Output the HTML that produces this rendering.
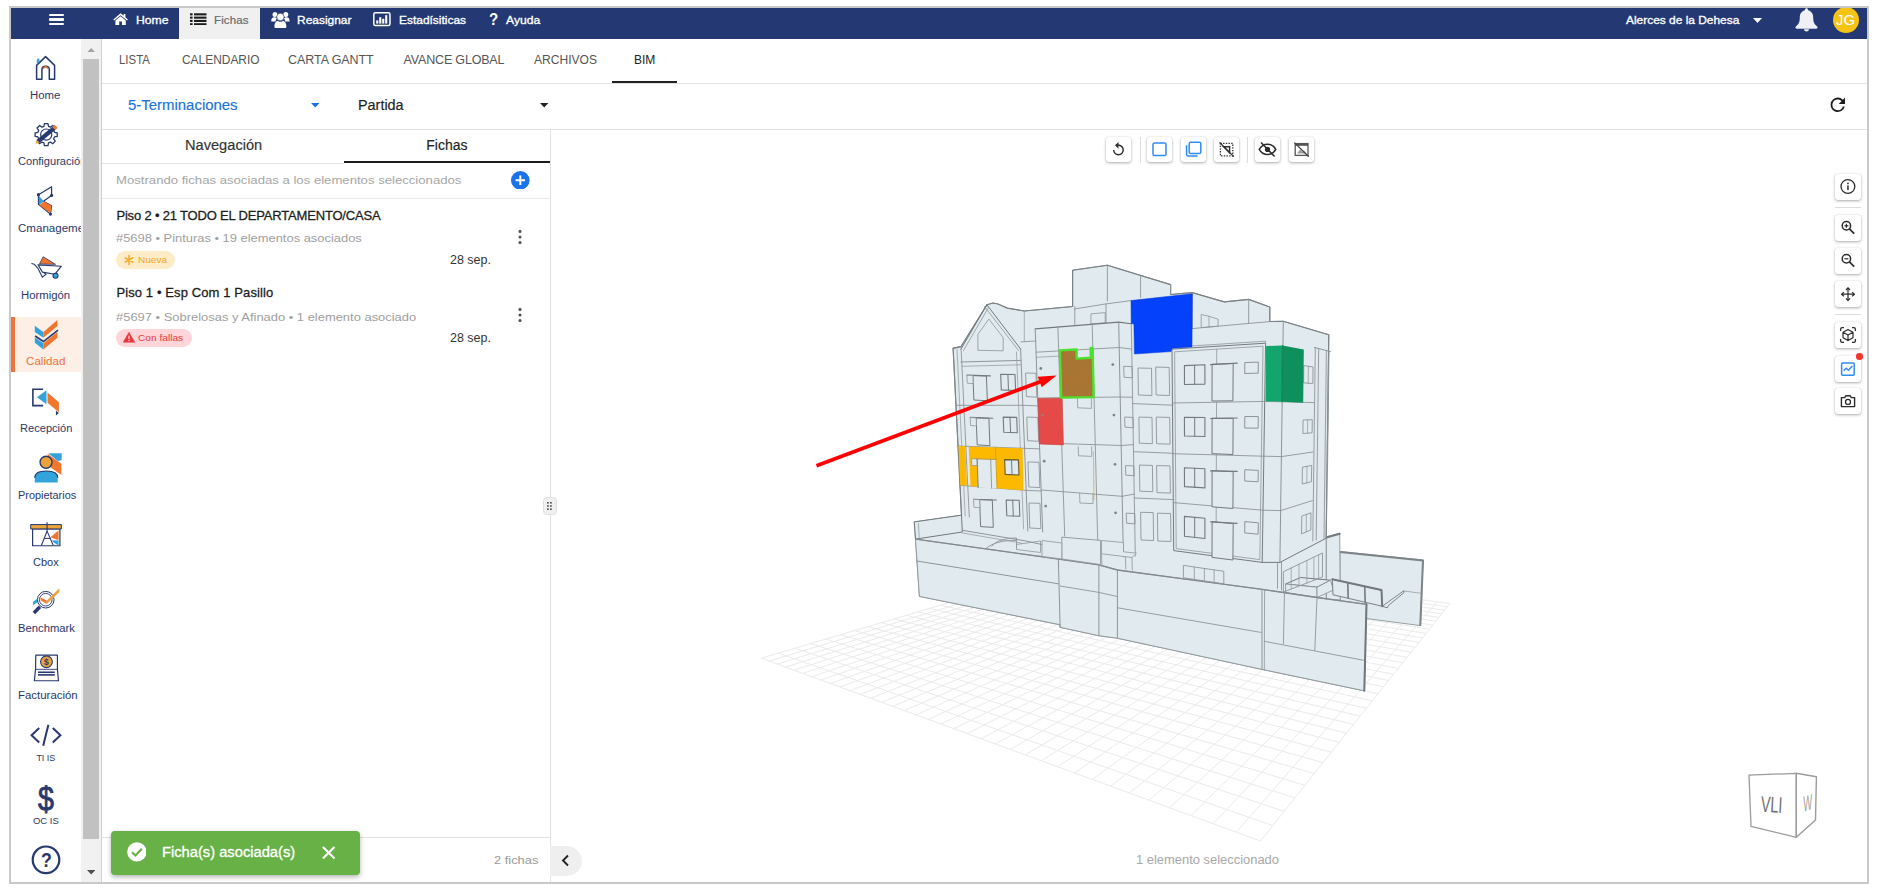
<!DOCTYPE html>
<html lang="es">
<head>
<meta charset="utf-8">
<title>Fichas BIM</title>
<style>
*{box-sizing:border-box;margin:0;padding:0}
html,body{width:1877px;height:890px;overflow:hidden;background:#fff}
body{font-family:"Liberation Sans",sans-serif;position:relative}
#app{position:absolute;left:11px;top:8px;width:1856px;height:874px;overflow:hidden;background:#fff}
#in{position:absolute;left:-11px;top:-8px;width:1877px;height:890px}
#frame{position:absolute;left:9px;top:6px;width:1860px;height:878px;border:2px solid #c9c9c9;pointer-events:none}
.a{position:absolute}
.t{position:absolute;white-space:nowrap;transform-origin:left center}
#topbar{left:11px;top:8px;width:1856px;height:31px;background:#243973}
#tabfichas{left:179px;top:8px;width:81px;height:31px;background:#f0f0f0}
#side{left:11px;top:39px;width:70px;height:843px;background:#fff;overflow:hidden}
#sbtrack{left:81px;top:39px;width:20px;height:843px;background:#f1f1f1}
#sbthumb{left:83px;top:59px;width:16px;height:780px;background:#c1c1c1}
#sbline{left:101px;top:39px;width:1px;height:843px;background:#d0d0d0}
.hl{position:absolute;height:1px;background:#e2e2e2}
.vl{position:absolute;width:1px;background:#e2e2e2}
#active{left:0;top:277.7px;width:70px;height:55.3px;background:#fdeee6;border-left:4px solid #f0743a;position:absolute}
.vb{position:absolute;width:25px;height:25px;background:#fff;border-radius:3px;box-shadow:0 1px 3px rgba(0,0,0,.32),0 0 1px rgba(0,0,0,.12)}
.rb{position:absolute;left:1835px;width:26px;height:26px;background:#fff;border-radius:3px;box-shadow:0 1px 3px rgba(0,0,0,.32),0 0 1px rgba(0,0,0,.12)}
.vb svg,.rb svg{position:absolute;left:0;top:0}
.badge{position:absolute;border-radius:9px}
#toast{left:110.5px;top:831.4px;width:249.2px;height:43.4px;background:#67b146;border-radius:4px;box-shadow:0 2px 5px rgba(0,0,0,.3)}
#collapse{left:550px;top:845.5px;width:32px;height:30.5px;background:#efefef;border-radius:0 15px 15px 0}
#handle{left:542.6px;top:496.6px;width:14.2px;height:18.6px;background:#f0f0f0;border:1px solid #e0e0e0;border-radius:4px}
</style>
</head>
<body>
<div id="app"><div id="in">
  <!-- top bar -->
  <div class="a" id="topbar"></div>
  <div class="a" id="tabfichas"></div>

  <!-- sidebar -->
  <div class="a" id="side">
    <div id="active"></div>
<span class="t" id="s2" style="left:7.2px;top:116.30px;font-size:10px;line-height:13.0px;font-weight:400;color:#2a3766;letter-spacing:0.000px;transform:scaleX(1.1066);">Configuración</span>
<span class="t" id="s3" style="left:7.2px;top:183.00px;font-size:10px;line-height:13.0px;font-weight:400;color:#2a3766;letter-spacing:0.000px;transform:scaleX(1.1556);">Cmanagement</span>
  </div>
  <div class="a" id="sbtrack"></div>
  <div class="a" id="sbthumb"></div>
  <div class="a" id="sbline"></div>

  <!-- rows -->
  <div class="hl" style="left:102px;top:82.5px;width:1765px"></div>
  <div class="a" style="left:611.7px;top:81px;width:65.3px;height:2px;background:#222"></div>
  <div class="hl" style="left:102px;top:129.3px;width:1765px"></div>
  <div class="vl" style="left:550px;top:130px;height:752px"></div>
  <div class="hl" style="left:102px;top:162.5px;width:242px"></div>
  <div class="a" style="left:344px;top:161px;width:206px;height:2px;background:#1c1c1c"></div>
  <div class="hl" style="left:102px;top:197.5px;width:448px;background:#ebebeb"></div>
  <div class="hl" style="left:102px;top:837.3px;width:448px"></div>

  <!-- badges -->
  <div class="badge" style="left:116.4px;top:251px;width:59px;height:18px;background:#fdecc8"></div>
  <div class="badge" style="left:116.4px;top:329.3px;width:75.3px;height:18px;background:#ffd5d9"></div>

  <div class="a" id="handle"></div>
  <div class="a" id="collapse"></div>

<svg class="a" id="bld" style="left:0;top:0" width="1877" height="890" viewBox="0 0 1877 890">
<path d="M761.2 658.2L1104.2 556.7M769.1 661.1L1111.4 557.7M777.2 664.1L1118.6 558.7M785.5 667.1L1126.0 559.7M794.0 670.2L1133.5 560.7M802.7 673.4L1141.1 561.7M811.7 676.7L1148.8 562.7M820.8 680.0L1156.6 563.8M830.3 683.5L1164.5 564.9M840.0 687.0L1172.6 566.0M850.0 690.7L1180.8 567.1M860.2 694.4L1189.1 568.2M870.7 698.3L1197.6 569.3M881.6 702.3L1206.2 570.5M892.7 706.4L1214.9 571.7M904.2 710.6L1223.8 572.9M916.1 714.9L1232.8 574.1M928.3 719.4L1241.9 575.3M940.9 724.0L1251.3 576.6M953.8 728.7L1260.7 577.9M967.2 733.6L1270.4 579.2M981.1 738.7L1280.1 580.5M995.4 743.9L1290.1 581.9M1010.2 749.3L1300.2 583.2M1025.4 754.9L1310.6 584.6M1041.3 760.7L1321.0 586.1M1057.6 766.7L1331.7 587.5M1074.6 772.9L1342.6 589.0M1092.2 779.4L1353.7 590.5M1110.5 786.1L1364.9 592.0M1129.5 793.0L1376.4 593.5M1149.2 800.2L1388.1 595.1M1169.7 807.7L1400.0 596.7M1191.0 815.6L1412.2 598.4M1213.2 823.7L1424.5 600.1M1236.3 832.2L1437.1 601.8M1260.5 841.0L1450.0 603.5M761.2 658.2L1260.5 841.0M778.3 653.1L1272.8 825.6M794.8 648.3L1284.2 811.3M810.6 643.6L1294.9 797.9M825.8 639.1L1304.9 785.4M840.5 634.7L1314.2 773.6M854.6 630.6L1323.0 762.6M868.2 626.5L1331.3 752.2M881.3 622.7L1339.1 742.4M894.0 618.9L1346.5 733.2M906.2 615.3L1353.5 724.4M918.0 611.8L1360.1 716.1M929.4 608.4L1366.4 708.3M940.4 605.2L1372.4 700.8M951.1 602.0L1378.0 693.7M961.5 598.9L1383.4 686.9M971.5 596.0L1388.6 680.5M981.2 593.1L1393.5 674.3M990.6 590.3L1398.2 668.4M999.8 587.6L1402.7 662.8M1008.7 585.0L1407.0 657.4M1017.3 582.4L1411.2 652.2M1025.7 579.9L1415.1 647.2M1033.8 577.5L1418.9 642.4M1041.7 575.2L1422.6 637.9M1049.4 572.9L1426.1 633.5M1056.9 570.7L1429.5 629.2M1064.2 568.5L1432.7 625.1M1071.3 566.4L1435.9 621.2M1078.2 564.4L1438.9 617.4M1085.0 562.4L1441.8 613.8M1091.5 560.5L1444.6 610.2M1097.9 558.6L1447.4 606.8M1104.2 556.7L1450.0 603.5" fill="none" stroke="#ebebeb" stroke-width="1"/>
<polygon points="1340.0,551.5 1423.1,560.0 1420.4,625.6 1366.0,618.5 1340.0,612.0" fill="#e1eaee" stroke="#8d9598" stroke-width="0.9" stroke-linejoin="round" />
<polyline points="1340.0,552.0 1423.0,560.5 1420.3,625.0" fill="none" stroke="#7d8487" stroke-width="2" stroke-linejoin="round" stroke-linecap="round" />
<polyline points="1403.8,591.0 1420.6,593.2" fill="none" stroke="#8d9598" stroke-width="0.7" stroke-linejoin="round" stroke-linecap="round" />
<polygon points="1382.2,606.3 1403.8,590.8 1403.8,592.8 1388.3,605.6 1387.5,607.8" fill="#e1eaee" stroke="#737a7d" stroke-width="0.9" stroke-linejoin="round" />
<polygon points="1326.2,537.0 1339.7,533.2 1340.2,600.0 1326.2,600.0" fill="#e1eaee" stroke="#8d9598" stroke-width="0.9" stroke-linejoin="round" />
<polyline points="1326.2,537.5 1339.7,533.8" fill="none" stroke="#737a7d" stroke-width="2" stroke-linejoin="round" stroke-linecap="round" />
<polygon points="961.5,515.2 953.1,348.3 961.0,346.5 986.9,304.8 993.0,303.0 998.0,304.0 1007.4,308.1 1024.3,311.0 1072.6,306.5 1072.6,270.2 1107.4,265.2 1170.6,284.6 1170.6,294.5 1192.2,292.6 1224.3,301.9 1248.7,299.4 1269.8,307.0 1269.8,321.5 1283.3,321.3 1328.8,334.8 1326.2,538.0 1326.2,600.0 1366.5,604.3 1364.3,690.8 1262.0,669.4 1117.4,638.2 1098.9,635.7 1060.1,627.3 1060.1,624.7 919.4,596.4 914.3,521.9" fill="#e1eaee" stroke="#8d9598" stroke-width="1.0" stroke-linejoin="round" />
<polyline points="961.5,515.2 953.1,348.3 961.0,346.5 986.9,304.8 993.0,303.0 998.0,304.0 1007.4,308.1 1024.3,311.0 1072.6,306.5 1072.6,270.2 1107.4,265.2 1170.6,284.6 1170.6,294.5 1192.2,292.6 1224.3,301.9 1248.7,299.4 1269.8,307.0 1269.8,321.5 1283.3,321.3 1328.8,334.8 1326.2,538.0" fill="none" stroke="#7b8285" stroke-width="1.15" stroke-linejoin="round" stroke-linecap="round" />
<polyline points="1107.4,265.2 1107.4,301.0" fill="none" stroke="#8d9598" stroke-width="0.9" stroke-linejoin="round" stroke-linecap="round" />
<polyline points="1140.6,275.5 1140.6,297.5" fill="none" stroke="#8d9598" stroke-width="0.9" stroke-linejoin="round" stroke-linecap="round" />
<polyline points="1170.6,284.6 1170.6,294.5" fill="none" stroke="#8d9598" stroke-width="0.9" stroke-linejoin="round" stroke-linecap="round" />
<polyline points="1074.3,309.0 1106.0,303.9 1131.0,300.6" fill="none" stroke="#8d9598" stroke-width="0.9" stroke-linejoin="round" stroke-linecap="round" />
<polyline points="1106.0,303.9 1106.0,322.8" fill="none" stroke="#8d9598" stroke-width="0.9" stroke-linejoin="round" stroke-linecap="round" />
<polyline points="1074.8,306.5 1074.8,324.5" fill="none" stroke="#8d9598" stroke-width="0.9" stroke-linejoin="round" stroke-linecap="round" />
<polygon points="1090.9,313.9 1105.2,312.6 1105.2,322.8 1090.9,323.9" fill="none" stroke="#8d9598" stroke-width="0.8" stroke-linejoin="round" />
<polyline points="986.9,304.8 1020.6,349.0" fill="none" stroke="#737a7d" stroke-width="1" stroke-linejoin="round" stroke-linecap="round" />
<polyline points="984.5,306.5 1018.5,350.5" fill="none" stroke="#8d9598" stroke-width="0.8" stroke-linejoin="round" stroke-linecap="round" />
<polyline points="986.9,304.8 961.0,349.0" fill="none" stroke="#737a7d" stroke-width="1" stroke-linejoin="round" stroke-linecap="round" />
<polyline points="988.5,307.5 963.5,350.5" fill="none" stroke="#8d9598" stroke-width="0.8" stroke-linejoin="round" stroke-linecap="round" />
<polyline points="1024.3,311.0 1024.3,341.5" fill="none" stroke="#8d9598" stroke-width="0.7" stroke-linejoin="round" stroke-linecap="round" />
<polyline points="1192.3,293.0 1192.3,328.6" fill="none" stroke="#8d9598" stroke-width="0.9" stroke-linejoin="round" stroke-linecap="round" />
<polyline points="1192.3,328.6 1240.0,324.2 1269.8,321.6" fill="none" stroke="#8d9598" stroke-width="0.9" stroke-linejoin="round" stroke-linecap="round" />
<polyline points="1248.7,299.4 1248.7,323.5" fill="none" stroke="#8d9598" stroke-width="0.9" stroke-linejoin="round" stroke-linecap="round" />
<polygon points="1201.2,314.5 1209.0,316.3 1218.1,319.2 1218.1,326.2 1201.2,327.6" fill="none" stroke="#8d9598" stroke-width="0.8" stroke-linejoin="round" />
<polyline points="1209.0,316.3 1209.0,327.0" fill="none" stroke="#8d9598" stroke-width="0.7" stroke-linejoin="round" stroke-linecap="round" />
<polyline points="1283.3,321.3 1279.9,562.4" fill="none" stroke="#8d9598" stroke-width="1" stroke-linejoin="round" stroke-linecap="round" />
<polyline points="1314.4,347.4 1330.5,351.6" fill="none" stroke="#8d9598" stroke-width="1" stroke-linejoin="round" stroke-linecap="round" />
<polyline points="1315.3,348.0 1312.8,541.0" fill="none" stroke="#8d9598" stroke-width="0.9" stroke-linejoin="round" stroke-linecap="round" />
<polyline points="1318.7,349.0 1316.2,540.0" fill="none" stroke="#8d9598" stroke-width="0.9" stroke-linejoin="round" stroke-linecap="round" />
<polyline points="1326.4,351.0 1324.0,538.0" fill="none" stroke="#8d9598" stroke-width="0.9" stroke-linejoin="round" stroke-linecap="round" />
<polyline points="1329.0,352.0 1327.5,470.0" fill="none" stroke="#8d9598" stroke-width="0.9" stroke-linejoin="round" stroke-linecap="round" />
<polygon points="1172.0,349.1 1265.6,343.2 1262.2,562.4 1173.7,550.6" fill="none" stroke="#737a7d" stroke-width="1" stroke-linejoin="round" />
<polygon points="1174.6,351.8 1263.0,346.2 1259.8,559.6 1176.2,548.6" fill="none" stroke="#8d9598" stroke-width="0.8" stroke-linejoin="round" />
<polyline points="1172.0,349.1 1172.0,347.2 1265.6,341.2 1265.6,343.2" fill="none" stroke="#8d9598" stroke-width="0.8" stroke-linejoin="round" stroke-linecap="round" />
<polyline points="1172.5,403.0 1264.7,401.4" fill="none" stroke="#8d9598" stroke-width="0.9" stroke-linejoin="round" stroke-linecap="round" />
<polyline points="1264.7,401.4 1282.2,401.8" fill="none" stroke="#8d9598" stroke-width="0.9" stroke-linejoin="round" stroke-linecap="round" />
<polyline points="1282.2,401.8 1313.7,402.6" fill="none" stroke="#8d9598" stroke-width="0.9" stroke-linejoin="round" stroke-linecap="round" />
<polyline points="1172.9,453.7 1263.9,456.2" fill="none" stroke="#8d9598" stroke-width="0.9" stroke-linejoin="round" stroke-linecap="round" />
<polyline points="1263.9,456.2 1281.4,456.6" fill="none" stroke="#8d9598" stroke-width="0.9" stroke-linejoin="round" stroke-linecap="round" />
<polyline points="1281.4,456.6 1313.0,452.0" fill="none" stroke="#8d9598" stroke-width="0.9" stroke-linejoin="round" stroke-linecap="round" />
<polyline points="1173.3,502.6 1263.0,510.2" fill="none" stroke="#8d9598" stroke-width="0.9" stroke-linejoin="round" stroke-linecap="round" />
<polyline points="1263.0,510.2 1280.7,510.6" fill="none" stroke="#8d9598" stroke-width="0.9" stroke-linejoin="round" stroke-linecap="round" />
<polyline points="1280.7,510.6 1312.4,500.6" fill="none" stroke="#8d9598" stroke-width="0.9" stroke-linejoin="round" stroke-linecap="round" />
<polyline points="1216.7,349.5 1216.7,366.0" fill="none" stroke="#8d9598" stroke-width="0.8" stroke-linejoin="round" stroke-linecap="round" />
<polyline points="1216.5,402.5 1216.5,420.0" fill="none" stroke="#8d9598" stroke-width="0.8" stroke-linejoin="round" stroke-linecap="round" />
<polyline points="1216.4,454.5 1216.3,472.0" fill="none" stroke="#8d9598" stroke-width="0.8" stroke-linejoin="round" stroke-linecap="round" />
<polyline points="1216.2,505.0 1216.2,523.0" fill="none" stroke="#8d9598" stroke-width="0.8" stroke-linejoin="round" stroke-linecap="round" />
<polygon points="1184.4,365.6 1204.9,364.8 1204.9,384.1 1184.5,384.5" fill="none" stroke="#737a7d" stroke-width="1.1" stroke-linejoin="round" />
<polyline points="1194.6,365.2 1194.7,384.3" fill="none" stroke="#737a7d" stroke-width="1" stroke-linejoin="round" stroke-linecap="round" />
<polygon points="1212.1,364.3 1233.2,363.5 1232.9,400.8 1212.0,401.0" fill="#e1eaee" stroke="#737a7d" stroke-width="1" stroke-linejoin="round" />
<polyline points="1210.6,364.6 1237.2,363.2" fill="none" stroke="#737a7d" stroke-width="1.2" stroke-linejoin="round" stroke-linecap="round" />
<polygon points="1244.8,362.6 1258.3,362.1 1258.2,373.1 1244.7,373.5" fill="none" stroke="#8d9598" stroke-width="1" stroke-linejoin="round" />
<polygon points="1184.4,417.4 1204.9,417.5 1204.9,436.5 1184.5,436.0" fill="none" stroke="#737a7d" stroke-width="1.1" stroke-linejoin="round" />
<polyline points="1194.7,417.5 1194.7,436.2" fill="none" stroke="#737a7d" stroke-width="1" stroke-linejoin="round" stroke-linecap="round" />
<polygon points="1212.1,418.2 1233.2,418.3 1232.9,454.5 1212.0,453.7" fill="#e1eaee" stroke="#737a7d" stroke-width="1" stroke-linejoin="round" />
<polyline points="1210.6,418.5 1237.2,418.0" fill="none" stroke="#737a7d" stroke-width="1.2" stroke-linejoin="round" stroke-linecap="round" />
<polygon points="1244.8,416.5 1258.3,416.6 1258.1,428.2 1244.7,428.0" fill="none" stroke="#8d9598" stroke-width="1" stroke-linejoin="round" />
<polygon points="1184.4,467.7 1204.9,468.7 1204.9,487.9 1184.5,486.6" fill="none" stroke="#737a7d" stroke-width="1.1" stroke-linejoin="round" />
<polyline points="1194.7,468.2 1194.7,487.3" fill="none" stroke="#737a7d" stroke-width="1" stroke-linejoin="round" stroke-linecap="round" />
<polygon points="1212.1,470.6 1233.2,471.7 1232.9,508.5 1212.0,506.8" fill="#e1eaee" stroke="#737a7d" stroke-width="1" stroke-linejoin="round" />
<polyline points="1210.6,470.9 1237.2,471.4" fill="none" stroke="#737a7d" stroke-width="1.2" stroke-linejoin="round" stroke-linecap="round" />
<polygon points="1244.8,469.7 1258.3,470.4 1258.1,481.8 1244.7,481.0" fill="none" stroke="#8d9598" stroke-width="1" stroke-linejoin="round" />
<polygon points="1184.4,516.4 1204.9,518.3 1204.9,538.5 1184.5,536.3" fill="none" stroke="#737a7d" stroke-width="1.1" stroke-linejoin="round" />
<polyline points="1194.7,517.3 1194.7,537.4" fill="none" stroke="#737a7d" stroke-width="1" stroke-linejoin="round" stroke-linecap="round" />
<polygon points="1212.1,521.6 1233.2,523.6 1232.9,560.0 1212.0,557.4" fill="#e1eaee" stroke="#737a7d" stroke-width="1" stroke-linejoin="round" />
<polyline points="1210.6,521.9 1237.2,523.3" fill="none" stroke="#737a7d" stroke-width="1.2" stroke-linejoin="round" stroke-linecap="round" />
<polygon points="1244.8,521.6 1258.3,522.8 1258.1,534.2 1244.7,532.9" fill="none" stroke="#8d9598" stroke-width="1" stroke-linejoin="round" />
<polygon points="1303.8,365.6 1313.0,367.0 1312.8,383.6 1303.6,382.8" fill="none" stroke="#8d9598" stroke-width="0.9" stroke-linejoin="round" />
<polyline points="1308.4,366.3 1308.2,383.2" fill="none" stroke="#8d9598" stroke-width="0.7" stroke-linejoin="round" stroke-linecap="round" />
<polygon points="1303.1,420.0 1312.3,419.7 1312.1,432.8 1302.9,433.5" fill="none" stroke="#8d9598" stroke-width="0.9" stroke-linejoin="round" />
<polyline points="1307.7,419.8 1307.5,433.1" fill="none" stroke="#8d9598" stroke-width="0.7" stroke-linejoin="round" stroke-linecap="round" />
<polygon points="1302.4,467.2 1311.7,465.4 1311.4,481.7 1302.2,484.0" fill="none" stroke="#8d9598" stroke-width="0.9" stroke-linejoin="round" />
<polyline points="1307.0,466.3 1306.8,482.9" fill="none" stroke="#8d9598" stroke-width="0.7" stroke-linejoin="round" stroke-linecap="round" />
<polygon points="1301.8,516.1 1311.0,512.8 1310.8,530.0 1301.5,533.8" fill="none" stroke="#8d9598" stroke-width="0.9" stroke-linejoin="round" />
<polyline points="1306.4,514.5 1306.2,531.9" fill="none" stroke="#8d9598" stroke-width="0.7" stroke-linejoin="round" stroke-linecap="round" />
<polyline points="1131.3,323.7 1135.3,556.0" fill="none" stroke="#8d9598" stroke-width="0.9" stroke-linejoin="round" stroke-linecap="round" />
<polyline points="1132.7,403.6 1173.0,405.2" fill="none" stroke="#8d9598" stroke-width="0.9" stroke-linejoin="round" stroke-linecap="round" />
<polyline points="1133.5,451.7 1173.4,453.3" fill="none" stroke="#8d9598" stroke-width="0.9" stroke-linejoin="round" stroke-linecap="round" />
<polyline points="1134.3,498.0 1173.8,499.6" fill="none" stroke="#8d9598" stroke-width="0.9" stroke-linejoin="round" stroke-linecap="round" />
<polygon points="1123.7,366.3 1132.1,366.6 1132.5,377.8 1124.1,377.3" fill="none" stroke="#8d9598" stroke-width="0.9" stroke-linejoin="round" />
<polygon points="1138.0,368.0 1151.5,368.3 1151.9,395.5 1138.4,395.0" fill="none" stroke="#8d9598" stroke-width="0.9" stroke-linejoin="round" />
<polygon points="1155.7,367.1 1169.2,367.4 1169.6,395.5 1156.1,395.0" fill="none" stroke="#8d9598" stroke-width="0.9" stroke-linejoin="round" />
<polygon points="1124.6,417.1 1133.0,417.4 1133.4,427.7 1125.0,427.2" fill="none" stroke="#8d9598" stroke-width="0.9" stroke-linejoin="round" />
<polygon points="1138.9,417.1 1152.0,417.4 1152.4,443.7 1139.3,443.2" fill="none" stroke="#8d9598" stroke-width="0.9" stroke-linejoin="round" />
<polygon points="1156.2,417.1 1169.7,417.4 1170.1,444.2 1156.6,443.7" fill="none" stroke="#8d9598" stroke-width="0.9" stroke-linejoin="round" />
<polygon points="1125.4,465.6 1133.8,465.9 1134.2,475.7 1125.8,475.2" fill="none" stroke="#8d9598" stroke-width="0.9" stroke-linejoin="round" />
<polygon points="1139.4,465.1 1152.4,465.4 1152.8,491.7 1139.8,491.2" fill="none" stroke="#8d9598" stroke-width="0.9" stroke-linejoin="round" />
<polygon points="1156.6,465.6 1170.0,465.9 1170.4,493.1 1157.0,492.6" fill="none" stroke="#8d9598" stroke-width="0.9" stroke-linejoin="round" />
<polygon points="1126.2,513.2 1134.7,513.5 1135.1,523.8 1126.6,523.3" fill="none" stroke="#8d9598" stroke-width="0.9" stroke-linejoin="round" />
<polygon points="1140.6,512.3 1153.2,512.6 1153.6,540.5 1141.0,540.0" fill="none" stroke="#8d9598" stroke-width="0.9" stroke-linejoin="round" />
<polygon points="1157.4,513.2 1170.6,513.5 1171.0,541.5 1157.8,541.0" fill="none" stroke="#8d9598" stroke-width="0.9" stroke-linejoin="round" />
<polyline points="1035.2,328.9 1118.7,322.1 1131.3,323.7" fill="none" stroke="#737a7d" stroke-width="1.1" stroke-linejoin="round" stroke-linecap="round" />
<polyline points="1035.2,328.9 1042.7,532.0" fill="none" stroke="#8d9598" stroke-width="1" stroke-linejoin="round" stroke-linecap="round" />
<polyline points="1118.7,322.1 1123.4,557.0" fill="none" stroke="#8d9598" stroke-width="1" stroke-linejoin="round" stroke-linecap="round" />
<polyline points="1057.9,327.0 1064.7,536.0" fill="none" stroke="#8d9598" stroke-width="0.9" stroke-linejoin="round" stroke-linecap="round" />
<polyline points="1092.2,324.3 1097.9,548.0" fill="none" stroke="#8d9598" stroke-width="0.9" stroke-linejoin="round" stroke-linecap="round" />
<polyline points="1036.1,352.2 1119.2,347.5" fill="none" stroke="#8d9598" stroke-width="0.9" stroke-linejoin="round" stroke-linecap="round" />
<polyline points="1119.2,347.5 1131.7,349.1" fill="none" stroke="#8d9598" stroke-width="0.9" stroke-linejoin="round" stroke-linecap="round" />
<polyline points="1037.8,398.0 1120.2,397.0" fill="none" stroke="#8d9598" stroke-width="0.9" stroke-linejoin="round" stroke-linecap="round" />
<polyline points="1120.2,397.0 1132.6,397.3" fill="none" stroke="#8d9598" stroke-width="0.9" stroke-linejoin="round" stroke-linecap="round" />
<polyline points="1039.4,442.9 1121.2,445.5" fill="none" stroke="#8d9598" stroke-width="0.9" stroke-linejoin="round" stroke-linecap="round" />
<polyline points="1121.2,445.5 1133.4,444.6" fill="none" stroke="#8d9598" stroke-width="0.9" stroke-linejoin="round" stroke-linecap="round" />
<polyline points="1041.2,490.0 1122.2,496.3" fill="none" stroke="#8d9598" stroke-width="0.9" stroke-linejoin="round" stroke-linecap="round" />
<polyline points="1122.2,496.3 1134.3,494.1" fill="none" stroke="#8d9598" stroke-width="0.9" stroke-linejoin="round" stroke-linecap="round" />
<polyline points="1036.3,357.3 1059.5,356.1" fill="none" stroke="#8d9598" stroke-width="0.7" stroke-linejoin="round" stroke-linecap="round" />
<circle cx="1040.8" cy="368.5" r="1.4" fill="#7e8588"/>
<circle cx="1112.8" cy="364.6" r="1.4" fill="#7e8588"/>
<circle cx="1042.5" cy="415.1" r="1.4" fill="#7e8588"/>
<circle cx="1113.9" cy="415.1" r="1.4" fill="#7e8588"/>
<circle cx="1044.2" cy="461.2" r="1.4" fill="#7e8588"/>
<circle cx="1115" cy="464.3" r="1.4" fill="#7e8588"/>
<circle cx="1045.7" cy="506.1" r="1.4" fill="#7e8588"/>
<circle cx="1115.6" cy="512.8" r="1.4" fill="#7e8588"/>
<polyline points="1077.4,398.2 1077.7,407.8 1091.4,408.4 1091.4,398.2" fill="none" stroke="#8d9598" stroke-width="0.8" stroke-linejoin="round" stroke-linecap="round" />
<polyline points="1078.2,446.6 1078.5,455.8 1091.7,456.4 1091.7,446.6" fill="none" stroke="#8d9598" stroke-width="0.8" stroke-linejoin="round" stroke-linecap="round" />
<polyline points="1079.6,493.8 1079.9,503.0 1093.0,503.6 1093.0,493.8" fill="none" stroke="#8d9598" stroke-width="0.8" stroke-linejoin="round" stroke-linecap="round" />
<polyline points="1093.4,451.6 1094.0,499.7" fill="none" stroke="#c9a04a" stroke-width="0.9" stroke-linejoin="round" stroke-linecap="round" stroke-opacity="0.75"/>
<polyline points="953.1,348.3 961.0,346.5" fill="none" stroke="#737a7d" stroke-width="1" stroke-linejoin="round" stroke-linecap="round" />
<polyline points="961.0,347.0 969.3,517.0" fill="none" stroke="#8d9598" stroke-width="0.9" stroke-linejoin="round" stroke-linecap="round" />
<polyline points="957.0,349.0 965.2,516.0" fill="none" stroke="#8d9598" stroke-width="0.7" stroke-linejoin="round" stroke-linecap="round" />
<polyline points="1020.6,348.6 1027.8,531.0" fill="none" stroke="#8d9598" stroke-width="1" stroke-linejoin="round" stroke-linecap="round" />
<polyline points="1016.5,352.0 1023.6,529.0" fill="none" stroke="#8d9598" stroke-width="0.7" stroke-linejoin="round" stroke-linecap="round" />
<polyline points="1020.9,341.9 1035.2,341.0" fill="none" stroke="#8d9598" stroke-width="0.9" stroke-linejoin="round" stroke-linecap="round" />
<polygon points="977.9,334.3 988.9,319.1 1003.2,337.6 1003.2,350.8 977.9,350.3" fill="none" stroke="#8d9598" stroke-width="0.8" stroke-linejoin="round" />
<polyline points="961.0,362.0 1020.9,360.4" fill="none" stroke="#8d9598" stroke-width="1" stroke-linejoin="round" stroke-linecap="round" />
<polyline points="962.0,366.3 1020.9,364.8" fill="none" stroke="#8d9598" stroke-width="0.7" stroke-linejoin="round" stroke-linecap="round" />
<polyline points="955.9,405.3 1022.8,405.3 1038.1,405.9" fill="none" stroke="#8d9598" stroke-width="0.9" stroke-linejoin="round" stroke-linecap="round" />
<polyline points="958.0,446.0 1024.5,448.3 1039.7,448.9" fill="none" stroke="#8d9598" stroke-width="0.9" stroke-linejoin="round" stroke-linecap="round" />
<polyline points="959.9,485.3 1026.2,490.4 1041.2,491.0" fill="none" stroke="#8d9598" stroke-width="0.9" stroke-linejoin="round" stroke-linecap="round" />
<polygon points="972.9,375.6 986.4,376.0 987.4,400.8 973.9,400.0" fill="#e1eaee" stroke="#737a7d" stroke-width="1" stroke-linejoin="round" />
<polyline points="966.9,375.1 990.4,375.9" fill="none" stroke="#737a7d" stroke-width="1.1" stroke-linejoin="round" stroke-linecap="round" />
<polygon points="966.9,375.3 972.9,375.6 973.2,383.6 967.3,383.2" fill="#e1eaee" stroke="#8d9598" stroke-width="0.8" stroke-linejoin="round" />
<polygon points="1000.7,374.2 1015.0,374.5 1015.6,390.5 1001.3,389.9" fill="#e1eaee" stroke="#737a7d" stroke-width="1.1" stroke-linejoin="round" />
<polyline points="1007.9,374.4 1008.5,390.2" fill="none" stroke="#737a7d" stroke-width="1" stroke-linejoin="round" stroke-linecap="round" />
<polygon points="1025.6,373.0 1036.0,373.3 1036.8,397.2 1026.4,396.6" fill="none" stroke="#8d9598" stroke-width="0.9" stroke-linejoin="round" />
<polygon points="976.2,417.9 988.9,418.3 989.9,445.7 977.2,444.9" fill="#e1eaee" stroke="#737a7d" stroke-width="1" stroke-linejoin="round" />
<polyline points="970.2,417.4 992.9,418.2" fill="none" stroke="#737a7d" stroke-width="1.1" stroke-linejoin="round" stroke-linecap="round" />
<polygon points="970.2,417.6 976.2,417.9 976.5,425.9 970.6,425.5" fill="#e1eaee" stroke="#8d9598" stroke-width="0.8" stroke-linejoin="round" />
<polygon points="1003.2,417.1 1016.7,417.4 1017.3,432.8 1003.8,432.2" fill="#e1eaee" stroke="#737a7d" stroke-width="1.1" stroke-linejoin="round" />
<polyline points="1010.0,417.3 1010.6,432.5" fill="none" stroke="#737a7d" stroke-width="1" stroke-linejoin="round" stroke-linecap="round" />
<polygon points="1026.8,417.1 1037.8,417.4 1038.6,441.3 1027.6,440.7" fill="none" stroke="#8d9598" stroke-width="0.9" stroke-linejoin="round" />
<polygon points="979.6,499.7 992.3,500.1 993.3,527.4 980.6,526.6" fill="#e1eaee" stroke="#737a7d" stroke-width="1" stroke-linejoin="round" />
<polyline points="973.6,499.2 996.3,500.0" fill="none" stroke="#737a7d" stroke-width="1.1" stroke-linejoin="round" stroke-linecap="round" />
<polygon points="973.6,499.4 979.6,499.7 979.9,507.7 974.0,507.3" fill="#e1eaee" stroke="#8d9598" stroke-width="0.8" stroke-linejoin="round" />
<polygon points="1006.2,500.0 1019.2,500.3 1019.8,516.3 1006.8,515.7" fill="#e1eaee" stroke="#737a7d" stroke-width="1.1" stroke-linejoin="round" />
<polyline points="1012.7,500.2 1013.3,516.0" fill="none" stroke="#737a7d" stroke-width="1" stroke-linejoin="round" stroke-linecap="round" />
<polygon points="1029.0,503.0 1040.0,503.3 1040.8,528.6 1029.8,528.0" fill="none" stroke="#8d9598" stroke-width="0.9" stroke-linejoin="round" />
<polygon points="958.5,446.1 965.3,446.3 967.0,485.6 960.2,485.3" fill="#fdb900" stroke="none" stroke-width="0.9" stroke-linejoin="round" />
<polygon points="968.7,446.6 1022.6,448.3 1023.4,490.4 970.5,486.2" fill="#fdb900" stroke="none" stroke-width="0.9" stroke-linejoin="round" />
<polygon points="977.1,458.9 996.2,459.5 997.0,488.4 978.2,487.6" fill="#e1eaee" stroke="none" stroke-width="0.9" stroke-linejoin="round" />
<polygon points="971.5,458.7 977.1,458.9 977.3,465.6 971.8,465.4" fill="#e1eaee" stroke="#8d9598" stroke-width="0.7" stroke-linejoin="round" />
<polyline points="977.1,458.9 978.2,487.6" fill="none" stroke="#737a7d" stroke-width="0.9" stroke-linejoin="round" stroke-linecap="round" />
<polyline points="990.7,459.3 991.6,488.1" fill="none" stroke="#8d9598" stroke-width="0.9" stroke-linejoin="round" stroke-linecap="round" />
<polyline points="977.1,458.9 996.2,459.5" fill="none" stroke="#a98a3a" stroke-width="0.8" stroke-linejoin="round" stroke-linecap="round" />
<polygon points="1004.6,459.6 1018.4,459.9 1019.0,475.0 1005.2,474.4" fill="#e1eaee" stroke="#6b5a2a" stroke-width="1.1" stroke-linejoin="round" />
<polyline points="1011.5,459.8 1012.1,474.7" fill="none" stroke="#737a7d" stroke-width="1" stroke-linejoin="round" stroke-linecap="round" />
<polygon points="1028.0,462.0 1039.0,462.3 1039.8,487.6 1028.8,487.0" fill="none" stroke="#8d9598" stroke-width="0.9" stroke-linejoin="round" />
<polyline points="995.5,447.3 997.0,488.2" fill="none" stroke="#d49b00" stroke-width="0.9" stroke-linejoin="round" stroke-linecap="round" />
<polygon points="1037.8,398.5 1062.2,398.2 1063.4,444.9 1039.4,444.0" fill="#e64a48" stroke="#c24040" stroke-width="0.6" stroke-linejoin="round" />
<circle cx="1042.5" cy="415.1" r="1.4" fill="#9a7c80"/>
<polygon points="1059.9,350.4 1076.6,349.5 1076.6,358.6 1090.7,357.8 1090.7,347.9 1092.6,347.9 1093.6,397.1 1061.2,397.6" fill="#a97533" stroke="#4ae22c" stroke-width="2.4" stroke-linejoin="round" />
<polygon points="1131.0,300.5 1192.3,293.8 1192.0,346.9 1172.1,348.3 1171.1,351.6 1134.4,354.0 1133.9,324.1 1131.2,323.5" fill="#0341fa" stroke="#0338d8" stroke-width="0.5" stroke-linejoin="round" />
<polygon points="1266.1,346.1 1282.4,345.4 1281.6,401.7 1265.6,401.4" fill="#12a56d" stroke="none" stroke-width="0.9" stroke-linejoin="round" />
<polygon points="1282.4,345.4 1303.8,349.4 1303.2,402.7 1281.6,401.7" fill="#0f8f5b" stroke="none" stroke-width="0.9" stroke-linejoin="round" />
<polyline points="1282.4,345.4 1281.6,401.7" fill="none" stroke="#0c7a4d" stroke-width="0.8" stroke-linejoin="round" stroke-linecap="round" />
<polygon points="914.3,521.9 961.5,515.2 962.3,532.0 915.5,539.1" fill="#e1eaee" stroke="#737a7d" stroke-width="1" stroke-linejoin="round" />
<polyline points="918.5,523.5 919.2,538.3" fill="none" stroke="#8d9598" stroke-width="0.7" stroke-linejoin="round" stroke-linecap="round" />
<polyline points="962.3,530.3 1026.0,541.0 1045.0,545.2" fill="none" stroke="#8d9598" stroke-width="1" stroke-linejoin="round" stroke-linecap="round" />
<polyline points="962.3,533.0 1022.0,543.2" fill="none" stroke="#8d9598" stroke-width="0.7" stroke-linejoin="round" stroke-linecap="round" />
<polygon points="1285.6,584.0 1300.5,577.5 1330.5,580.2 1317.0,587.2" fill="#e1eaee" stroke="#737a7d" stroke-width="1" stroke-linejoin="round" />
<polygon points="1285.6,584.0 1317.0,587.2 1317.0,597.5 1285.6,592.6" fill="#e1eaee" stroke="#8d9598" stroke-width="0.9" stroke-linejoin="round" />
<polygon points="1317.0,587.2 1330.5,580.2 1333.5,590.0 1317.0,597.5" fill="#e1eaee" stroke="#8d9598" stroke-width="0.9" stroke-linejoin="round" />
<polygon points="1332.3,579.3 1381.5,590.1 1382.2,606.3 1333.0,594.8" fill="#e1eaee" stroke="#7f8689" stroke-width="1.1" stroke-linejoin="round" />
<polyline points="1332.3,579.3 1381.5,590.1 1382.2,606.3" fill="none" stroke="#737a7d" stroke-width="2" stroke-linejoin="round" stroke-linecap="round" />
<polyline points="1347.8,582.8 1348.2,598.3" fill="none" stroke="#737a7d" stroke-width="1.6" stroke-linejoin="round" stroke-linecap="round" />
<polyline points="1364.7,586.5 1365.2,602.3" fill="none" stroke="#737a7d" stroke-width="1.6" stroke-linejoin="round" stroke-linecap="round" />
<polygon points="915.5,539.1 1058.4,559.0 1098.9,564.9 1117.4,570.0 1180.0,578.4 1264.3,589.7 1317.0,597.5 1366.5,604.3 1364.3,690.8 1262.0,669.4 1117.4,638.2 1098.9,635.7 1060.1,627.3 1060.1,624.7 919.4,596.4" fill="#e1eaee" stroke="#8d9598" stroke-width="0.9" stroke-linejoin="round" />
<polyline points="915.5,539.1 1058.4,559.0 1098.9,564.9 1117.4,570.0 1180.0,578.4 1264.3,589.7 1317.0,597.5 1366.5,604.3" fill="none" stroke="#838a8d" stroke-width="1.35" stroke-linejoin="round" stroke-linecap="round" />
<polygon points="1061.8,537.1 1100.6,540.4 1100.6,564.6 1061.8,559.0" fill="#e1eaee" stroke="#8d9598" stroke-width="0.9" stroke-linejoin="round" />
<polygon points="1042.0,540.5 1061.8,543.0 1061.8,559.0 1042.0,556.4" fill="#e1eaee" stroke="#8d9598" stroke-width="0.8" stroke-linejoin="round" />
<polygon points="1101.5,553.8 1132.0,557.5 1136.5,553.2 1123.5,551.8 1123.5,542.5 1101.5,540.5" fill="#e1eaee" stroke="#8d9598" stroke-width="0.8" stroke-linejoin="round" />
<polyline points="1101.5,554.5 1102.0,566.0" fill="none" stroke="#8d9598" stroke-width="0.8" stroke-linejoin="round" stroke-linecap="round" />
<polyline points="1125.5,557.0 1125.8,569.0" fill="none" stroke="#8d9598" stroke-width="0.8" stroke-linejoin="round" stroke-linecap="round" />
<polyline points="1132.0,557.8 1132.3,570.0" fill="none" stroke="#8d9598" stroke-width="0.8" stroke-linejoin="round" stroke-linecap="round" />
<path d="M991.5 546.5 C996 540.5 1006 538 1016.5 538 L1016.5 548.5 M986 548.5 C992 543 1004 540 1016 540.5" fill="none" stroke="#8d9598" stroke-width="0.9"/>
<polygon points="1016.5,544.5 1040.5,541.0 1040.5,552.5 1016.5,549.5" fill="none" stroke="#8d9598" stroke-width="0.8" stroke-linejoin="round" />
<polyline points="1058.4,559.0 1060.1,627.3" fill="none" stroke="#8d9598" stroke-width="1" stroke-linejoin="round" stroke-linecap="round" />
<polyline points="1098.9,564.9 1098.9,635.7" fill="none" stroke="#8d9598" stroke-width="1" stroke-linejoin="round" stroke-linecap="round" />
<polyline points="1117.4,570.0 1117.4,638.2" fill="none" stroke="#8d9598" stroke-width="1" stroke-linejoin="round" stroke-linecap="round" />
<polyline points="916.9,561.0 1058.4,583.8" fill="none" stroke="#8d9598" stroke-width="1" stroke-linejoin="round" stroke-linecap="round" />
<polyline points="1060.1,586.0 1098.9,592.4 1116.6,596.4" fill="none" stroke="#8d9598" stroke-width="0.9" stroke-linejoin="round" stroke-linecap="round" />
<polyline points="1118.3,607.9 1260.9,632.4" fill="none" stroke="#8d9598" stroke-width="0.9" stroke-linejoin="round" stroke-linecap="round" />
<polyline points="1262.0,589.4 1262.0,669.4" fill="none" stroke="#8d9598" stroke-width="1" stroke-linejoin="round" stroke-linecap="round" />
<polyline points="1264.6,589.8 1264.3,669.9" fill="none" stroke="#8d9598" stroke-width="0.8" stroke-linejoin="round" stroke-linecap="round" />
<polyline points="1284.5,591.9 1283.4,643.6" fill="none" stroke="#8d9598" stroke-width="0.9" stroke-linejoin="round" stroke-linecap="round" />
<polyline points="1317.0,597.5 1314.8,650.3" fill="none" stroke="#8d9598" stroke-width="0.9" stroke-linejoin="round" stroke-linecap="round" />
<polyline points="1264.3,641.3 1364.3,660.4" fill="none" stroke="#8d9598" stroke-width="0.9" stroke-linejoin="round" stroke-linecap="round" />
<polyline points="1366.5,604.3 1364.3,690.8" fill="none" stroke="#70777a" stroke-width="2" stroke-linejoin="round" stroke-linecap="round" />
<polygon points="1183.4,565.4 1223.8,571.3 1223.8,583.8 1183.4,577.8" fill="none" stroke="#8d9598" stroke-width="0.9" stroke-linejoin="round" />
<polyline points="1194.3,567.0 1194.3,579.4" fill="none" stroke="#8d9598" stroke-width="0.8" stroke-linejoin="round" stroke-linecap="round" />
<polyline points="1204.4,568.5 1204.4,580.9" fill="none" stroke="#8d9598" stroke-width="0.8" stroke-linejoin="round" stroke-linecap="round" />
<polyline points="1214.1,569.9 1214.1,582.3" fill="none" stroke="#8d9598" stroke-width="0.8" stroke-linejoin="round" stroke-linecap="round" />
<polyline points="1262.2,562.4 1279.9,562.4 1326.0,538.3" fill="none" stroke="#737a7d" stroke-width="1" stroke-linejoin="round" stroke-linecap="round" />
<polyline points="1277.5,563.5 1277.5,588.5" fill="none" stroke="#8d9598" stroke-width="0.9" stroke-linejoin="round" stroke-linecap="round" />
<polyline points="1281.5,562.0 1281.5,590.0" fill="none" stroke="#8d9598" stroke-width="0.9" stroke-linejoin="round" stroke-linecap="round" />
<polygon points="1283.4,571.7 1322.5,553.0 1322.5,577.0 1283.4,592.0" fill="none" stroke="#8d9598" stroke-width="0.9" stroke-linejoin="round" />
<polyline points="1291.2,568.0 1291.2,589.0" fill="none" stroke="#8d9598" stroke-width="0.7" stroke-linejoin="round" stroke-linecap="round" />
<polyline points="1299.0,564.2 1299.0,586.0" fill="none" stroke="#8d9598" stroke-width="0.7" stroke-linejoin="round" stroke-linecap="round" />
<polyline points="1306.9,560.5 1306.9,583.0" fill="none" stroke="#8d9598" stroke-width="0.7" stroke-linejoin="round" stroke-linecap="round" />
<polyline points="1313.9,557.1 1313.9,580.3" fill="none" stroke="#8d9598" stroke-width="0.7" stroke-linejoin="round" stroke-linecap="round" />
<polyline points="1318.6,554.9 1318.6,578.5" fill="none" stroke="#8d9598" stroke-width="0.7" stroke-linejoin="round" stroke-linecap="round" />
<line x1="816.5" y1="465.8" x2="1041.6" y2="381.2" stroke="#ff0000" stroke-width="3.8"/>
<polygon points="1056.6,375.6 1041.7,387.2 1037.8,376.7" fill="#ff0000"/>
<polygon points="1749,775.2 1796.3,773.3 1796.3,837.3 1751,826.3" fill="#fff" stroke="#9b9b9b" stroke-width="1.3" stroke-linejoin="round"/>
<polygon points="1796.3,773.3 1816.4,776.7 1815.5,820 1796.3,837.3" fill="#fff" stroke="#9b9b9b" stroke-width="1.4" stroke-linejoin="round"/>
<text transform="translate(1771.3,812.3) rotate(3) scale(0.64,1)" font-family="Liberation Sans, sans-serif" font-size="22.5" fill="#707070" text-anchor="middle">VLI</text>
<text transform="translate(1807.6,810.5) skewY(-16) scale(0.43,1)" font-family="Liberation Sans, sans-serif" font-size="22" fill="#a2a2a2" text-anchor="middle">W</text>
</svg>

  <!-- viewer toolbar -->
  <div class="vl" style="left:1139.5px;top:137px;height:26px;background:#dcdcdc"></div>
  <div class="vl" style="left:1246.5px;top:137px;height:26px;background:#dcdcdc"></div>
  <div class="hl" style="left:1835px;top:207px;width:26px;background:#dcdcdc"></div>
  <div class="hl" style="left:1835px;top:314px;width:26px;background:#dcdcdc"></div>

<div class="a" style="left:49.2px;top:13.8px;width:14.8px;height:2.3px;background:#fff;border-radius:1px"></div>
<div class="a" style="left:49.2px;top:18.4px;width:14.8px;height:2.3px;background:#fff;border-radius:1px"></div>
<div class="a" style="left:49.2px;top:23px;width:14.8px;height:2.3px;background:#fff;border-radius:1px"></div>
<svg class="a" style="left:112.6px;top:13px" width="15.2" height="12.2" viewBox="0 0 15.2 12.2" ><path d="M7.6 0.3 L0.3 6.5 L1.2 7.5 L7.6 2.2 L14 7.5 L14.9 6.5 L12.4 4.3 V1 H10.6 V2.8 Z" fill="#fff"/><path d="M7.6 3.3 L2.4 7.6 V12.2 H6.2 V8.6 H9 V12.2 H12.8 V7.6 Z" fill="#fff"/></svg>
<svg class="a" style="left:190px;top:12.5px" width="16.5" height="12.7" viewBox="0 0 16.5 12.7" ><rect x="0" y="0.3" width="2.6" height="2.1" fill="#1c1c1c"/><rect x="4" y="0.3" width="12.5" height="2.1" fill="#1c1c1c"/><rect x="0" y="3.6" width="2.6" height="2.1" fill="#1c1c1c"/><rect x="4" y="3.6" width="12.5" height="2.1" fill="#1c1c1c"/><rect x="0" y="6.9" width="2.6" height="2.1" fill="#1c1c1c"/><rect x="4" y="6.9" width="12.5" height="2.1" fill="#1c1c1c"/><rect x="0" y="10.2" width="2.6" height="2.1" fill="#1c1c1c"/><rect x="4" y="10.2" width="12.5" height="2.1" fill="#1c1c1c"/></svg>
<svg class="a" style="left:270.9px;top:10.6px" width="18.8" height="17.6" viewBox="0 0 18.8 17.6" ><circle cx="4" cy="3.6" r="2.5" fill="#fff"/><circle cx="14.8" cy="3.6" r="2.5" fill="#fff"/><path d="M0.2 10.2 C0.2 7.3 1.6 6.3 3.2 6.3 C4.4 6.3 5.2 6.8 5.8 7.4 C5 8.3 4.6 9.3 4.6 10.6 H1 C0.5 10.6 0.2 10.5 0.2 10.2Z" fill="#fff"/><path d="M18.6 10.2 C18.6 7.3 17.2 6.3 15.6 6.3 C14.4 6.3 13.6 6.8 13 7.4 C13.8 8.3 14.2 9.3 14.2 10.6 H17.8 C18.3 10.6 18.6 10.5 18.6 10.2Z" fill="#fff"/><circle cx="9.4" cy="6" r="3.7" fill="#fff" stroke="#243973" stroke-width="0.6"/><path d="M3.4 15.6 C3.4 11.6 5.4 9.9 7 9.9 C7.8 10.5 8.5 10.8 9.4 10.8 C10.3 10.8 11 10.5 11.8 9.9 C13.4 9.9 15.4 11.6 15.4 15.6 C15.4 16.9 14.5 17.5 13.4 17.5 H5.4 C4.3 17.5 3.4 16.9 3.4 15.6Z" fill="#fff"/></svg>
<svg class="a" style="left:373.2px;top:12.2px" width="17.8" height="14.4" viewBox="0 0 17.8 14.4" ><rect x="0.8" y="0.8" width="16.2" height="12.8" rx="1.6" fill="none" stroke="#fff" stroke-width="1.5"/><rect x="3.2" y="8.4" width="2.1" height="3.2" fill="#fff"/><rect x="6.2" y="5.2" width="2.1" height="6.4" fill="#fff"/><rect x="9.2" y="6.8" width="2.1" height="4.8" fill="#fff"/><rect x="12.2" y="3.2" width="2.1" height="8.4" fill="#fff"/></svg>
<svg class="a" style="left:1753.2px;top:17.6px" width="9" height="5" viewBox="0 0 9 5" ><path d="M0 0 H9 L4.5 5Z" fill="#fff"/></svg>
<svg class="a" style="left:1794.5px;top:8px" width="23" height="23.5" viewBox="0 0 23 23.5" ><path d="M11.5 0.2 C12.4 0.2 13 0.9 13 1.8 V2.3 C16.3 3 18.2 5.9 18.2 9.3 C18.2 14.3 19.4 16.2 21.6 17.9 C22.2 18.4 22.6 19 22.6 19.6 C22.6 20.3 22 20.8 21.2 20.8 H1.8 C1 20.8 0.4 20.3 0.4 19.6 C0.4 19 0.8 18.4 1.4 17.9 C3.6 16.2 4.8 14.3 4.8 9.3 C4.8 5.9 6.7 3 10 2.3 V1.8 C10 0.9 10.6 0.2 11.5 0.2Z" fill="#eef0f6"/><path d="M9 21.3 H14 C14 22.6 12.9 23.4 11.5 23.4 C10.1 23.4 9 22.6 9 21.3Z" fill="#eef0f6"/></svg>
<div class="a" style="left:1832.5px;top:6.7px;width:26px;height:26px;border-radius:50%;background:#f6c414"></div>
<svg class="a" style="left:86.6px;top:48px" width="8.4" height="4.4" viewBox="0 0 8.4 4.4" ><path d="M0 4.4 L4.2 0 L8.4 4.4Z" fill="#a3a3a3"/></svg>
<svg class="a" style="left:86.6px;top:870.4px" width="8.4" height="4.4" viewBox="0 0 8.4 4.4" ><path d="M0 0 H8.4 L4.2 4.4Z" fill="#505050"/></svg>
<svg class="a" style="left:34px;top:53.5px" width="25" height="28" viewBox="0 0 25 28" ><path d="M2.6 25.2 V11.4 L11.6 2.6 L20.6 11.4 V25.2 H15.3 V15.8 C15.3 13.6 13.6 12.3 11.6 12.3 C9.6 12.3 7.9 13.6 7.9 15.8 V25.2 Z" fill="#fff" stroke="#27396f" stroke-width="1.5" stroke-linejoin="round"/><path d="M3.3 9.8 V5.2 H5 V8.2" fill="#33a3dc" stroke="#33a3dc" stroke-width="1"/><path d="M8.6 14.2 L11.6 11.6 L14.6 14.2 L13.8 15.3 C13 14.3 12.4 13.9 11.6 13.9 C10.8 13.9 10.2 14.3 9.4 15.3Z" fill="#f0762e"/></svg>
<svg class="a" style="left:33px;top:121px" width="27" height="27" viewBox="0 0 27 27" ><path d="M21.49 11.31 L24.26 11.82 L24.26 15.38 L21.49 15.89 L20.68 17.84 L22.28 20.16 L19.76 22.68 L17.44 21.08 L15.49 21.89 L14.98 24.66 L11.42 24.66 L10.91 21.89 L8.96 21.08 L6.64 22.68 L4.12 20.16 L5.72 17.84 L4.91 15.89 L2.14 15.38 L2.14 11.82 L4.91 11.31 L5.72 9.36 L4.12 7.04 L6.64 4.52 L8.96 6.12 L10.91 5.31 L11.42 2.54 L14.98 2.54 L15.49 5.31 L17.44 6.12 L19.76 4.52 L22.28 7.04 L20.68 9.36Z" fill="#fff" stroke="#27396f" stroke-width="1.3" stroke-linejoin="round"/><circle cx="13.2" cy="13.6" r="5.6" fill="#fff" stroke="#27396f" stroke-width="1.2"/><g transform="rotate(-40 13.2 13.6)"><rect x="2.6" y="11.5" width="20.5" height="4.3" fill="#27396f"/><rect x="23.1" y="11.5" width="3" height="4.3" fill="#f0762e"/><path d="M2.6 11.5 L-0.8 13.65 L2.6 15.8Z" fill="#eaa33b"/></g></svg>
<svg class="a" style="left:35px;top:184px" width="22" height="34" viewBox="0 0 22 34" ><polygon points="16.58,2.68 3.45,10.71 3.45,20.20 15.42,30.12 16.58,21.66 8.41,17.28 16.58,11.44" fill="#fff" stroke="#27396f" stroke-width="1.2" stroke-linejoin="round"/><polygon points="3.88,11.73 8.99,17.42 3.88,20.64" fill="#33a3dc"/><polygon points="4.18,20.93 9.28,17.57 16.44,21.80 15.56,29.25" fill="#f0762e"/><circle cx="3.45" cy="10.71" r="1.6" fill="#27396f"/><circle cx="16.58" cy="11.44" r="1.6" fill="#27396f"/><circle cx="15.42" cy="30.12" r="1.6" fill="#27396f"/></svg>
<svg class="a" style="left:29px;top:254px" width="36" height="28" viewBox="0 0 36 28" ><polygon points="10.47,10.05 14.12,2.75 26.53,10.34" fill="#f0762e" stroke="#27396f" stroke-width="0.8" stroke-linejoin="round"/><polygon points="9.01,10.78 32.36,12.24 25.80,20.27 13.39,18.08" fill="#fff" stroke="#27396f" stroke-width="1.2" stroke-linejoin="round"/><polyline points="2.44,9.47 5.36,10.34 9.01,14.43 13.39,23.19 17.04,20.27 14.85,18.52" fill="none" stroke="#27396f" stroke-width="1.1" stroke-linejoin="round"/><circle cx="26.53" cy="21.73" r="2.5" fill="#33a3dc" stroke="#27396f" stroke-width="1.1"/></svg>
<svg class="a" style="left:33px;top:318px" width="27" height="33" viewBox="0 0 27 33" ><polygon points="1.80,7.77 10.41,13.90 10.41,19.74 1.80,13.90" fill="#33a3dc"/><polygon points="10.41,13.90 24.42,1.93 24.42,8.06 10.41,19.74" fill="#f0762e"/><polygon points="1.80,19.45 10.41,25.28 10.41,31.42 1.80,24.85" fill="#33a3dc"/><polygon points="10.41,25.28 24.42,13.90 24.42,19.74 10.41,31.42" fill="#f0762e"/><polyline points="2.09,17.99 10.41,23.53 25.01,12.15" fill="none" stroke="#27396f" stroke-width="1.6"/></svg>
<svg class="a" style="left:31px;top:386px" width="30" height="32" viewBox="0 0 30 32" ><polyline points="12.12,3.27 1.90,3.27 1.90,19.62 12.12,19.62" fill="none" stroke="#27396f" stroke-width="1.6"/><polygon points="5.99,11.15 15.47,4.29 15.47,18.16" fill="#33a3dc"/><polygon points="16.50,6.48 27.88,16.26 27.88,26.19 16.50,16.70" fill="#f0762e"/><polygon points="24.96,24.73 27.88,26.92 24.96,29.40" fill="#27396f"/></svg>
<svg class="a" style="left:33px;top:451px" width="31" height="34" viewBox="0 0 31 34" ><polygon points="15.23,2.32 28.66,2.32 28.66,9.33 24.72,10.06" fill="#33a3dc"/><polygon points="14.50,2.76 28.36,12.69 28.36,23.93 17.12,15.90" fill="#f0762e"/><path d="M1.80 31.52 V26.41 C1.80 21.74 7.20 19.99 13.33 19.99 C19.61 19.99 24.72 21.74 24.72 26.41 V31.52Z" fill="#33a3dc"/><path d="M1.80 26.85 C1.80 21.74 7.20 19.99 13.33 19.99 C19.61 19.99 24.72 21.74 24.72 26.85" fill="none" stroke="#27396f" stroke-width="1.2"/><circle cx="13.04" cy="11.23" r="6" fill="#eaa33b" stroke="#27396f" stroke-width="1.3"/></svg>
<svg class="a" style="left:29px;top:520px" width="35" height="28" viewBox="0 0 35 28" ><polygon points="3.61,8.94 30.91,8.94 30.91,25.73 3.61,25.73" fill="#fff" stroke="#27396f" stroke-width="1.2"/><polygon points="21.42,17.26 29.59,10.40 29.59,20.18" fill="#f0762e"/><polygon points="23.17,20.18 29.59,20.62 29.59,25.44 24.63,22.52" fill="#33a3dc"/><polygon points="1.71,4.56 32.36,4.56 32.36,8.94 1.71,8.94" fill="#eaa33b" stroke="#27396f" stroke-width="1"/><polyline points="18.06,2.37 18.06,11.13 12.36,25.44" fill="none" stroke="#27396f" stroke-width="1.1"/><polyline points="18.06,11.13 24.34,25.44" fill="none" stroke="#27396f" stroke-width="1.1"/><polyline points="14.99,18.43 21.42,18.43" fill="none" stroke="#27396f" stroke-width="1"/></svg>
<svg class="a" style="left:31px;top:586px" width="31" height="32" viewBox="0 0 31 32" ><polygon points="1.90,15.90 6.28,12.69 7.01,15.90 2.19,19.11" fill="#33a3dc"/><circle cx="14.74" cy="13.71" r="8.3" fill="#fff" stroke="#27396f" stroke-width="1"/><circle cx="14.74" cy="13.71" r="6.3" fill="none" stroke="#27396f" stroke-width="0.9"/><polyline points="8.91,20.72 2.92,26.99" fill="none" stroke="#27396f" stroke-width="3.4"/><polygon points="9.20,11.23 15.77,14.44 15.77,18.09 9.93,14.44" fill="#f0762e"/><polygon points="15.77,14.44 28.18,2.47 28.61,5.68 15.77,18.09" fill="#eaa33b"/></svg>
<svg class="a" style="left:32px;top:653px" width="28" height="30" viewBox="0 0 28 30" ><polygon points="3.82,2.18 25.42,2.18 25.42,16.34 26.45,27.73 2.36,27.73 3.53,16.34" fill="#fff" stroke="#27396f" stroke-width="1.2" stroke-linejoin="round"/><polyline points="3.53,16.34 25.42,16.34" fill="none" stroke="#27396f" stroke-width="0.9"/><circle cx="14.47" cy="8.75" r="5.9" fill="#eaa33b" stroke="#27396f" stroke-width="1.1"/><text x="14.47" y="11.85" font-family="Liberation Sans, sans-serif" font-size="8.5" font-weight="700" fill="#27396f" text-anchor="middle">$</text><polyline points="6.01,19.26 22.80,19.26" fill="none" stroke="#27396f" stroke-width="1.6"/><polyline points="6.01,21.89 22.80,21.89" fill="none" stroke="#27396f" stroke-width="1.6"/></svg>
<svg class="a" style="left:29px;top:723px" width="34" height="25" viewBox="0 0 34 25" ><polyline points="10.2,5 2.6,12.2 10.2,19.4" fill="none" stroke="#27396f" stroke-width="2" stroke-linejoin="miter"/><polyline points="23.8,5 31.4,12.2 23.8,19.4" fill="none" stroke="#27396f" stroke-width="2"/><line x1="19.4" y1="1.8" x2="14.2" y2="22.8" stroke="#27396f" stroke-width="2"/></svg>
<svg class="a" style="left:30px;top:844px" width="32" height="32" viewBox="0 0 32 32" ><circle cx="16" cy="15.8" r="13.3" fill="#fff" stroke="#27396f" stroke-width="2.2"/></svg>
<svg class="a" style="left:311px;top:103.2px" width="8.4" height="4.4" viewBox="0 0 8.4 4.4" ><path d="M0 0 H8.4 L4.2 4.4Z" fill="#1a73d9"/></svg>
<svg class="a" style="left:540.4px;top:103.2px" width="8.4" height="4.4" viewBox="0 0 8.4 4.4" ><path d="M0 0 H8.4 L4.2 4.4Z" fill="#222"/></svg>
<svg class="a" style="left:1827.4px;top:94.2px" width="21.6" height="21.6" viewBox="0 0 24 24" ><path d="M17.65 6.35A7.96 7.96 0 0 0 12 4a8 8 0 1 0 7.73 10h-2.08A6 6 0 1 1 12 6c1.66 0 3.14.69 4.22 1.78L13 11h7V4l-2.35 2.35z" fill="#1c1c1c"/></svg>
<svg class="a" style="left:511px;top:170.7px" width="18.6" height="18.6" viewBox="0 0 18.6 18.6" ><circle cx="9.3" cy="9.3" r="9.3" fill="#1a73e8"/><path d="M9.3 4.6 V14 M4.6 9.3 H14" stroke="#fff" stroke-width="2" fill="none"/></svg>
<svg class="a" style="left:518.3px;top:228.6px" width="4" height="16" viewBox="0 0 4 16" ><circle cx="2" cy="2.4" r="1.55" fill="#555"/><circle cx="2" cy="8" r="1.55" fill="#555"/><circle cx="2" cy="13.6" r="1.55" fill="#555"/></svg>
<svg class="a" style="left:518.3px;top:306.9px" width="4" height="16" viewBox="0 0 4 16" ><circle cx="2" cy="2.4" r="1.55" fill="#555"/><circle cx="2" cy="8" r="1.55" fill="#555"/><circle cx="2" cy="13.6" r="1.55" fill="#555"/></svg>
<svg class="a" style="left:123.5px;top:255.4px" width="10" height="10" viewBox="0 0 10 10" ><path d="M5 0.6 V9.4 M1.2 2.8 L8.8 7.2 M8.8 2.8 L1.2 7.2" stroke="#f6a821" stroke-width="1.5" fill="none" stroke-linecap="round"/></svg>
<svg class="a" style="left:123px;top:332.4px" width="12" height="10.6" viewBox="0 0 12 10.6" ><path d="M6 0.3 L11.8 10.3 H0.2 Z" fill="#e5393a" stroke="#e5393a" stroke-width="0.5" stroke-linejoin="round"/><rect x="5.4" y="3.6" width="1.2" height="3.6" fill="#ffd5d9"/><rect x="5.4" y="8" width="1.2" height="1.2" fill="#ffd5d9"/></svg>
<svg class="a" style="left:546.2px;top:500.7px" width="7" height="10" viewBox="0 0 7 10" ><rect x="1.1" y="1" width="1.6" height="1.6" fill="#444"/><rect x="1.1" y="4.2" width="1.6" height="1.6" fill="#444"/><rect x="1.1" y="7.4" width="1.6" height="1.6" fill="#444"/><rect x="4.1" y="1" width="1.6" height="1.6" fill="#444"/><rect x="4.1" y="4.2" width="1.6" height="1.6" fill="#444"/><rect x="4.1" y="7.4" width="1.6" height="1.6" fill="#444"/></svg>
<svg class="a" style="left:561px;top:854px" width="9" height="13" viewBox="0 0 9 13" ><polyline points="7,1.5 2,6.5 7,11.5" fill="none" stroke="#222" stroke-width="1.9"/></svg><div class="vb" style="left:1106px;top:137px"><svg width="25" height="25" viewBox="0 0 25 25"><g transform="translate(4.3,4.2) scale(0.68)"><path d="M12 5V1L7 6l5 5V7c3.31 0 6 2.69 6 6s-2.690 6-6 6-6-2.690-6-6H4c0 4.420 3.580 8 8 8s8-3.580 8-8-3.580-8-8-8z" fill="#2b2b2b"/></g></svg></div>
<div class="vb" style="left:1146.5px;top:137px"><svg width="25" height="25" viewBox="0 0 25 25"><rect x="6" y="6" width="13" height="12.6" rx="1.6" fill="none" stroke="#2f8cf5" stroke-width="1.5"/></svg></div>
<div class="vb" style="left:1180.5px;top:137px"><svg width="25" height="25" viewBox="0 0 25 25"><rect x="8.2" y="5.2" width="11.6" height="11.2" rx="1.5" fill="none" stroke="#2f8cf5" stroke-width="1.5"/><path d="M5.6 8.2 V17.4 C5.6 18.4 6.3 19.1 7.3 19.1 H16.6" fill="none" stroke="#2f8cf5" stroke-width="1.5"/></svg></div>
<div class="vb" style="left:1213.5px;top:137px"><svg width="25" height="25" viewBox="0 0 25 25"><rect x="6.4" y="6.4" width="12.4" height="12.4" fill="none" stroke="#2b2b2b" stroke-width="1.3" stroke-dasharray="1.4 1.3"/><path d="M9.6 9.8 H15.6 V15.8 Z" fill="none" stroke="#2b2b2b" stroke-width="1.4"/><line x1="5.6" y1="5.4" x2="19.8" y2="19.6" stroke="#2b2b2b" stroke-width="1.3"/></svg></div>
<div class="vb" style="left:1255px;top:137px"><svg width="25" height="25" viewBox="0 0 25 25"><path d="M4.2 12.4 C6.4 8.6 9.4 7.2 12.5 7.2 C15.6 7.2 18.6 8.6 20.8 12.4 C18.6 16.2 15.6 17.6 12.5 17.6 C9.4 17.6 6.400 16.2 4.2 12.4Z" fill="none" stroke="#2b2b2b" stroke-width="1.5"/><circle cx="12.5" cy="12.4" r="2.6" fill="#2b2b2b"/><line x1="6" y1="5.6" x2="19.6" y2="19.6" stroke="#2b2b2b" stroke-width="1.5"/></svg></div>
<div class="vb" style="left:1288.5px;top:137px"><svg width="25" height="25" viewBox="0 0 25 25"><rect x="6.2" y="6.6" width="12.8" height="11.8" fill="none" stroke="#555" stroke-width="1.3"/><rect x="6.2" y="6.6" width="12.8" height="2.2" fill="#555"/><path d="M8 16.6 L11.2 12.6 L13.4 15 L15 13.4 L17.4 16.600Z" fill="#9a9a9a"/><line x1="5.4" y1="5.6" x2="19.8" y2="19.8" stroke="#444" stroke-width="1.3"/></svg></div>
<div class="rb" style="top:173.8px"><svg width="26" height="26" viewBox="0 0 26 26"><circle cx="12.9" cy="12.5" r="6.9" fill="none" stroke="#2b2b2b" stroke-width="1.3"/><rect x="12.2" y="11.4" width="1.5" height="4.6" fill="#2b2b2b"/><rect x="12.2" y="8.6" width="1.5" height="1.6" fill="#2b2b2b"/></svg></div>
<div class="rb" style="top:214.8px"><svg width="26" height="26" viewBox="0 0 26 26"><circle cx="11.4" cy="10.8" r="4.2" fill="none" stroke="#2b2b2b" stroke-width="1.5"/><line x1="14.4" y1="13.900" x2="19.2" y2="18.600" stroke="#2b2b2b" stroke-width="1.7"/><line x1="9.4" y1="10.8" x2="13.4" y2="10.8" stroke="#2b2b2b" stroke-width="1.2"/><line x1="11.4" y1="8.8" x2="11.4" y2="12.8" stroke="#2b2b2b" stroke-width="1.2"/></svg></div>
<div class="rb" style="top:248px"><svg width="26" height="26" viewBox="0 0 26 26"><circle cx="11.4" cy="10.8" r="4.2" fill="none" stroke="#2b2b2b" stroke-width="1.5"/><line x1="14.4" y1="13.900" x2="19.2" y2="18.600" stroke="#2b2b2b" stroke-width="1.7"/><line x1="9.4" y1="10.8" x2="13.4" y2="10.8" stroke="#2b2b2b" stroke-width="1.2"/></svg></div>
<div class="rb" style="top:281px"><svg width="26" height="26" viewBox="0 0 26 26"><path d="M13 7 V19.4 M6.800 13.2 H19.2" stroke="#2b2b2b" stroke-width="1.2" fill="none"/><path d="M11 9 L13 6.800 L15 9 M11 17.4 L13 19.600 L15 17.4 M8.800 11.2 L6.600 13.2 L8.800 15.2 M17.2 11.2 L19.4 13.2 L17.2 15.2" stroke="#2b2b2b" stroke-width="1.2" fill="none"/></svg></div>
<div class="rb" style="top:322px"><svg width="26" height="26" viewBox="0 0 26 26"><path d="M13 7.4 L18 10.200 V15.8 L13 18.600 L8 15.8 V10.200Z M8 10.200 L13 13 L18 10.200 M13 13 V18.600" fill="none" stroke="#2b2b2b" stroke-width="1.2" stroke-linejoin="round"/><path d="M5.6 9 V7.2 C5.6 6.300 6.300 5.600 7.200 5.600 H9 M17 5.600 H18.8 C19.700 5.600 20.4 6.300 20.4 7.200 V9 M20.4 17 V18.800 C20.4 19.700 19.700 20.4 18.800 20.4 H17 M9 20.4 H7.200 C6.300 20.4 5.600 19.700 5.600 18.800 V17" fill="none" stroke="#2b2b2b" stroke-width="1.3"/></svg></div>
<div class="rb" style="top:355.5px"><svg width="26" height="26" viewBox="0 0 26 26"><rect x="6.6" y="7" width="12.6" height="12.2" rx="1" fill="none" stroke="#2f8cf5" stroke-width="1.5"/><polyline points="8.600,14.8 11.2,12.2 13.4,14.2 17.4,10" fill="none" stroke="#2f8cf5" stroke-width="1.5"/></svg><div style="position:absolute;left:21px;top:-2.600px;width:6.6px;height:6.6px;border-radius:50%;background:#f1352f"></div></div>
<div class="rb" style="top:388.2px"><svg width="26" height="26" viewBox="0 0 26 26"><path d="M6.400 9.600 H9.600 L10.800 7.800 H15.2 L16.400 9.600 H19.600 V18.600 H6.400Z" fill="none" stroke="#2b2b2b" stroke-width="1.4" stroke-linejoin="round"/><circle cx="13" cy="13.900" r="2.500" fill="none" stroke="#2b2b2b" stroke-width="1.3"/></svg></div>

  <div class="a" id="toast"></div>
<svg class="a" style="left:126.6px;top:842.2px" width="19.8" height="19.8" viewBox="0 0 18.6 18.6"><circle cx="9.3" cy="9.3" r="9.1" fill="#fff"/><polyline points="4.800,9.600 8,12.700 13.900,6.400" fill="none" stroke="#67b146" stroke-width="2"/></svg>
<svg class="a" style="left:321.5px;top:845.6px" width="13.4" height="13.4" viewBox="0 0 12 12"><path d="M0.800 0.800 L11.2 11.2 M11.2 0.800 L0.800 11.2" stroke="#fff" stroke-width="1.900" fill="none"/></svg>
<span class="t" id="tb_home" style="left:135.5px;top:13.03px;font-size:11.5px;line-height:14.95px;font-weight:400;color:#fff;letter-spacing:0.000px;transform:scaleX(1.0591);-webkit-text-stroke:0.32px #fff;">Home</span>
<span class="t" id="tb_fichas" style="left:214.0px;top:13.03px;font-size:11.5px;line-height:14.95px;font-weight:400;color:#6a6a6a;letter-spacing:0.104px;-webkit-text-stroke:0.2px #6a6a6a;">Fichas</span>
<span class="t" id="tb_reas" style="left:296.5px;top:13.03px;font-size:11.5px;line-height:14.95px;font-weight:400;color:#fff;letter-spacing:0.000px;transform:scaleX(1.0396);-webkit-text-stroke:0.32px #fff;">Reasignar</span>
<span class="t" id="tb_est" style="left:399.0px;top:13.03px;font-size:11.5px;line-height:14.95px;font-weight:400;color:#fff;letter-spacing:0.000px;transform:scaleX(1.0378);-webkit-text-stroke:0.32px #fff;">Estadísiticas</span>
<span class="t" id="tb_q" style="left:488.9px;top:9.60px;font-size:16px;line-height:20.8px;font-weight:700;color:#fff;letter-spacing:0.000px;transform:scaleX(0.9406);">?</span>
<span class="t" id="tb_ayuda" style="left:505.8px;top:13.03px;font-size:11.5px;line-height:14.95px;font-weight:400;color:#fff;letter-spacing:0.000px;transform:scaleX(1.0554);-webkit-text-stroke:0.32px #fff;">Ayuda</span>
<span class="t" id="tb_proj" style="left:1625.7px;top:12.72px;font-size:11.5px;line-height:14.95px;font-weight:400;color:#fff;letter-spacing:0.000px;transform:scaleX(1.0365);-webkit-text-stroke:0.32px #fff;">Alerces de la Dehesa</span>
<span class="t" id="tb_jg" style="left:1836.0px;top:10.90px;font-size:14px;line-height:18.2px;font-weight:400;color:#fff;letter-spacing:0.000px;transform:scaleX(1.0620);">JG</span>
<span class="t" id="st1" style="left:118.6px;top:51.88px;font-size:12.5px;line-height:16.25px;font-weight:400;color:#555;letter-spacing:0.000px;transform:scaleX(0.9168);">LISTA</span>
<span class="t" id="st2" style="left:181.6px;top:51.88px;font-size:12.5px;line-height:16.25px;font-weight:400;color:#555;letter-spacing:0.000px;transform:scaleX(0.9547);">CALENDARIO</span>
<span class="t" id="st3" style="left:288.0px;top:51.88px;font-size:12.5px;line-height:16.25px;font-weight:400;color:#555;letter-spacing:-0.060px;">CARTA GANTT</span>
<span class="t" id="st4" style="left:403.6px;top:51.88px;font-size:12.5px;line-height:16.25px;font-weight:400;color:#555;letter-spacing:-0.181px;">AVANCE GLOBAL</span>
<span class="t" id="st5" style="left:534.0px;top:51.88px;font-size:12.5px;line-height:16.25px;font-weight:400;color:#555;letter-spacing:0.000px;transform:scaleX(0.9648);">ARCHIVOS</span>
<span class="t" id="st6" style="left:634.0px;top:51.88px;font-size:12.5px;line-height:16.25px;font-weight:400;color:#222;letter-spacing:0.000px;transform:scaleX(0.9625);">BIM</span>
<span class="t" id="f1" style="left:128.0px;top:95.90px;font-size:14px;line-height:18.2px;font-weight:400;color:#1a73d9;letter-spacing:0.000px;transform:scaleX(1.0670);-webkit-text-stroke:0.15px #1a73d9;">5-Terminaciones</span>
<span class="t" id="f2" style="left:358.0px;top:95.90px;font-size:14px;line-height:18.2px;font-weight:400;color:#222;letter-spacing:0.000px;transform:scaleX(1.0280);-webkit-text-stroke:0.15px #222;">Partida</span>
<span class="t" id="pt1" style="left:184.6px;top:135.60px;font-size:14px;line-height:18.2px;font-weight:400;color:#333;letter-spacing:0.000px;transform:scaleX(1.0441);-webkit-text-stroke:0.15px #333;">Navegación</span>
<span class="t" id="pt2" style="left:426.3px;top:135.60px;font-size:14px;line-height:18.2px;font-weight:400;color:#222;letter-spacing:-0.022px;-webkit-text-stroke:0.15px #222;">Fichas</span>
<span class="t" id="info" style="left:116.4px;top:172.93px;font-size:11.5px;line-height:14.95px;font-weight:400;color:#a6a6a6;letter-spacing:0.000px;transform:scaleX(1.1423);">Mostrando fichas asociadas a los elementos seleccionados</span>
<span class="t" id="c1t" style="left:116.4px;top:207.95px;font-size:13px;line-height:16.9px;font-weight:400;color:#1c1c1c;letter-spacing:-0.178px;-webkit-text-stroke:0.28px #1c1c1c;">Piso 2 • 21 TODO EL DEPARTAMENTO/CASA</span>
<span class="t" id="c1s" style="left:116.4px;top:231.12px;font-size:11.5px;line-height:14.95px;font-weight:400;color:#9e9e9e;letter-spacing:0.000px;transform:scaleX(1.1222);">#5698 • Pinturas • 19 elementos asociados</span>
<span class="t" id="c1b" style="left:138.0px;top:253.82px;font-size:9.5px;line-height:12.35px;font-weight:400;color:#f6a821;letter-spacing:0.000px;transform:scaleX(1.0594);">Nueva</span>
<span class="t" id="c1d" style="left:449.5px;top:252.60px;font-size:12px;line-height:15.6px;font-weight:400;color:#333;letter-spacing:0.000px;transform:scaleX(1.0413);">28 sep.</span>
<span class="t" id="c2t" style="left:116.4px;top:284.85px;font-size:13px;line-height:16.9px;font-weight:400;color:#1c1c1c;letter-spacing:0.111px;-webkit-text-stroke:0.28px #1c1c1c;">Piso 1 • Esp Com 1 Pasillo</span>
<span class="t" id="c2s" style="left:116.4px;top:309.92px;font-size:11.5px;line-height:14.95px;font-weight:400;color:#9e9e9e;letter-spacing:0.000px;transform:scaleX(1.1244);">#5697 • Sobrelosas y Afinado • 1 elemento asociado</span>
<span class="t" id="c2b" style="left:138.0px;top:331.82px;font-size:9.5px;line-height:12.35px;font-weight:400;color:#e5393a;letter-spacing:0.000px;transform:scaleX(1.0675);">Con fallas</span>
<span class="t" id="c2d" style="left:449.5px;top:331.20px;font-size:12px;line-height:15.6px;font-weight:400;color:#333;letter-spacing:0.000px;transform:scaleX(1.0413);">28 sep.</span>
<span class="t" id="nf" style="left:494.0px;top:852.92px;font-size:11.5px;line-height:14.95px;font-weight:400;color:#9a9a9a;letter-spacing:0.000px;transform:scaleX(1.1201);">2 fichas</span>
<span class="t" id="toasttx" style="left:161.8px;top:842.90px;font-size:14px;line-height:18.2px;font-weight:400;color:#fff;letter-spacing:0.000px;transform:scaleX(1.0502);-webkit-text-stroke:0.3px #fff;">Ficha(s) asociada(s)</span>
<span class="t" id="sel" style="left:1136.0px;top:853.40px;font-size:12px;line-height:15.6px;font-weight:400;color:#a8a8a8;letter-spacing:0.000px;transform:scaleX(1.0771);">1 elemento seleccionado</span>
<span class="t" id="s1" style="left:30.3px;top:88.60px;font-size:10px;line-height:13.0px;font-weight:400;color:#2a3766;letter-spacing:0.000px;transform:scaleX(1.1354);">Home</span>
<span class="t" id="s4" style="left:21.2px;top:288.70px;font-size:10px;line-height:13.0px;font-weight:400;color:#2a3766;letter-spacing:0.000px;transform:scaleX(1.1324);">Hormigón</span>
<span class="t" id="s5" style="left:25.8px;top:355.40px;font-size:10px;line-height:13.0px;font-weight:400;color:#f0743a;letter-spacing:0.000px;transform:scaleX(1.1615);">Calidad</span>
<span class="t" id="s6" style="left:19.7px;top:422.10px;font-size:10px;line-height:13.0px;font-weight:400;color:#2a3766;letter-spacing:0.000px;transform:scaleX(1.1086);">Recepción</span>
<span class="t" id="s7" style="left:18.2px;top:488.80px;font-size:10px;line-height:13.0px;font-weight:400;color:#2a3766;letter-spacing:0.000px;transform:scaleX(1.0907);">Propietarios</span>
<span class="t" id="s8" style="left:32.7px;top:555.50px;font-size:10px;line-height:13.0px;font-weight:400;color:#2a3766;letter-spacing:0.000px;transform:scaleX(1.1045);">Cbox</span>
<span class="t" id="s9" style="left:17.5px;top:622.20px;font-size:10px;line-height:13.0px;font-weight:400;color:#2a3766;letter-spacing:0.000px;transform:scaleX(1.1270);">Benchmark</span>
<span class="t" id="s10" style="left:17.5px;top:688.90px;font-size:10px;line-height:13.0px;font-weight:400;color:#2a3766;letter-spacing:0.000px;transform:scaleX(1.1426);">Facturación</span>
<span class="t" id="s11" style="left:36.4px;top:752.75px;font-size:9px;line-height:11.7px;font-weight:400;color:#2a3766;letter-spacing:-0.043px;">TI IS</span>
<span class="t" id="sdollar" style="left:37.5px;top:775.90px;font-size:34px;line-height:44.2px;font-weight:400;color:#2a3766;letter-spacing:0.406px;transform:scaleX(.84);transform-origin:left center;-webkit-text-stroke:0.9px #27396f;">$</span>
<span class="t" id="sq" style="left:40.6px;top:847.53px;font-size:19.5px;line-height:25.35px;font-weight:700;color:#2a3766;letter-spacing:0.000px;transform:scaleX(0.9059);">?</span>
<span class="t" id="s12" style="left:32.9px;top:815.65px;font-size:9px;line-height:11.7px;font-weight:400;color:#2a3766;letter-spacing:0.000px;transform:scaleX(1.0524);">OC IS</span>
</div></div>
<div id="frame"></div>
</body>
</html>
